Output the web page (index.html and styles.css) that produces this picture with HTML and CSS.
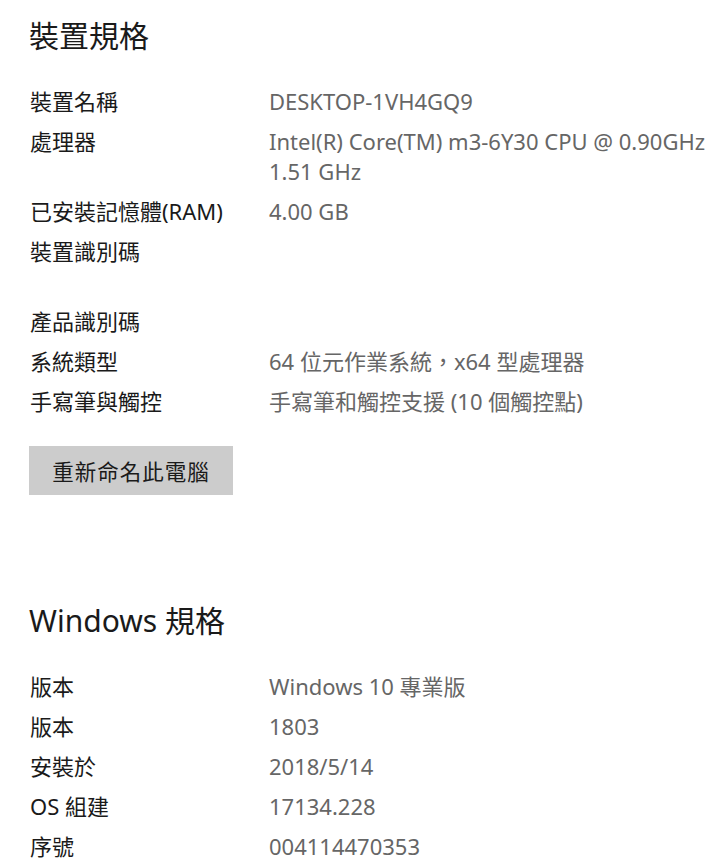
FILE: index.html
```html
<!DOCTYPE html>
<html lang="zh-Hant">
<head>
    <title>關於</title>
    <link rel="stylesheet" href="styles.css">
</head>
<body>
<div class="page">
    <h2 class="heading">裝置規格</h2>
    <div class="specs">
        <div class="label">裝置名稱</div>
        <div class="value">DESKTOP-1VH4GQ9</div>

        <div class="label">處理器</div>
        <div class="value">Intel(R) Core(TM) m3-6Y30 CPU @ 0.90GHz<br>1.51 GHz</div>

        <div class="label">已安裝記憶體(RAM)</div>
        <div class="value">4.00 GB</div>

        <div class="label">裝置識別碼</div>
        <div class="value blank"></div>

        <div class="label">產品識別碼</div>
        <div class="value"></div>

        <div class="label">系統類型</div>
        <div class="value">64 位元作業系統，x64 型處理器</div>

        <div class="label">手寫筆與觸控</div>
        <div class="value">手寫筆和觸控支援 (10 個觸控點)</div>
    </div>

    <button type="button" class="rename">重新命名此電腦</button>

    <h2 class="heading windows">Windows 規格</h2>
    <div class="specs">
        <div class="label">版本</div>
        <div class="value">Windows 10 專業版</div>

        <div class="label">版本</div>
        <div class="value">1803</div>

        <div class="label">安裝於</div>
        <div class="value">2018/5/14</div>

        <div class="label">OS 組建</div>
        <div class="value">17134.228</div>

        <div class="label">序號</div>
        <div class="value">004114470353</div>
    </div>
</div>
</body>
</html>
```

FILE: styles.css
```css
body {
    margin: 0;
    background: #fff;
    font-family: "Noto Sans", "Noto Sans CJK TC", sans-serif;
    color: #1a1a1a;
}
.page {
    padding: 16px 0 0 29px;
}
.heading {
    margin: 0;
    font-size: 30px;
    font-weight: normal;
    line-height: 40px;
}
.heading.windows {
    margin-top: 106px;
}
.specs {
    display: grid;
    grid-template-columns: 240px 1fr;
    row-gap: 10px;
    margin-top: 30px;
    font-size: 22px;
    line-height: 30px;
}
.label {
    padding-left: 1px;
}
.value {
    color: #666;
}
.value.blank {
    height: 60px;
}
.rename {
    margin-top: 30px;
    width: 204px;
    height: 49px;
    border: none;
    background: #cccccc;
    font-family: inherit;
    font-size: 21.5px;
    letter-spacing: 1px;
    color: #1a1a1a;
    cursor: pointer;
}
.rename:hover {
    background: #b8b8b8;
}
```
